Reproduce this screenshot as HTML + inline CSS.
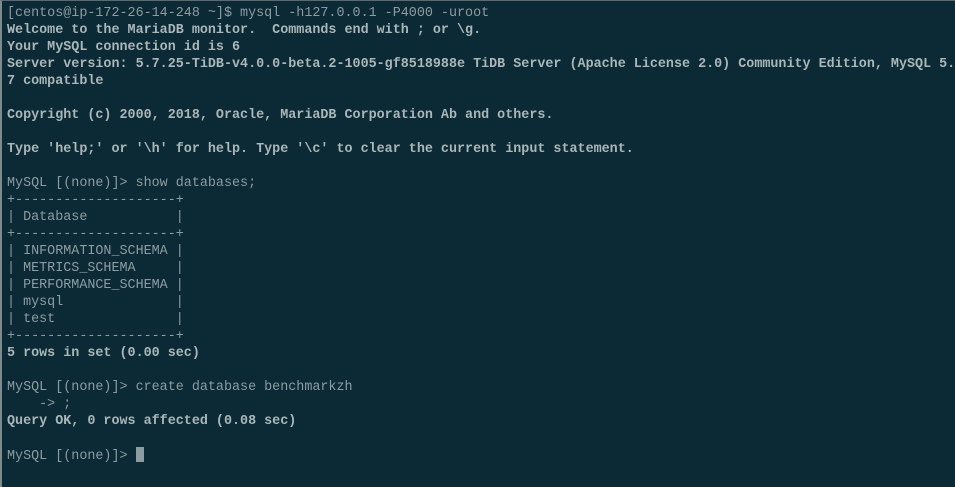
<!DOCTYPE html>
<html><head><meta charset="utf-8"><style>
html,body{margin:0;padding:0;}
body{width:955px;height:487px;background:#0b2a35;overflow:hidden;position:relative;border-left:2px solid #7d8a8e;border-top:1px solid #5a6a70;box-sizing:border-box;}
pre{margin:0;position:absolute;left:5px;top:4px;font-family:"Liberation Mono",monospace;font-size:13.4px;line-height:17px;color:#8d9ca1;white-space:pre;}
b{color:#aab6b8;font-weight:bold;}
.cur{display:inline-block;width:8px;height:15px;background:#8d9ca1;vertical-align:-3px;}
</style></head><body><pre>[centos@ip-172-26-14-248 ~]$ mysql -h127.0.0.1 -P4000 -uroot
<b>Welcome to the MariaDB monitor.  Commands end with ; or \g.</b>
<b>Your MySQL connection id is 6</b>
<b>Server version: 5.7.25-TiDB-v4.0.0-beta.2-1005-gf8518988e TiDB Server (Apache License 2.0) Community Edition, MySQL 5.</b>
<b>7 compatible</b>

<b>Copyright (c) 2000, 2018, Oracle, MariaDB Corporation Ab and others.</b>

<b>Type 'help;' or '\h' for help. Type '\c' to clear the current input statement.</b>

MySQL [(none)]&gt; show databases;
+--------------------+
| Database           |
+--------------------+
| INFORMATION_SCHEMA |
| METRICS_SCHEMA     |
| PERFORMANCE_SCHEMA |
| mysql              |
| test               |
+--------------------+
<b>5 rows in set (0.00 sec)</b>

MySQL [(none)]&gt; create database benchmarkzh
    -&gt; ;
<b>Query OK, 0 rows affected (0.08 sec)</b>

MySQL [(none)]&gt; <span class="cur"></span></pre></body></html>
